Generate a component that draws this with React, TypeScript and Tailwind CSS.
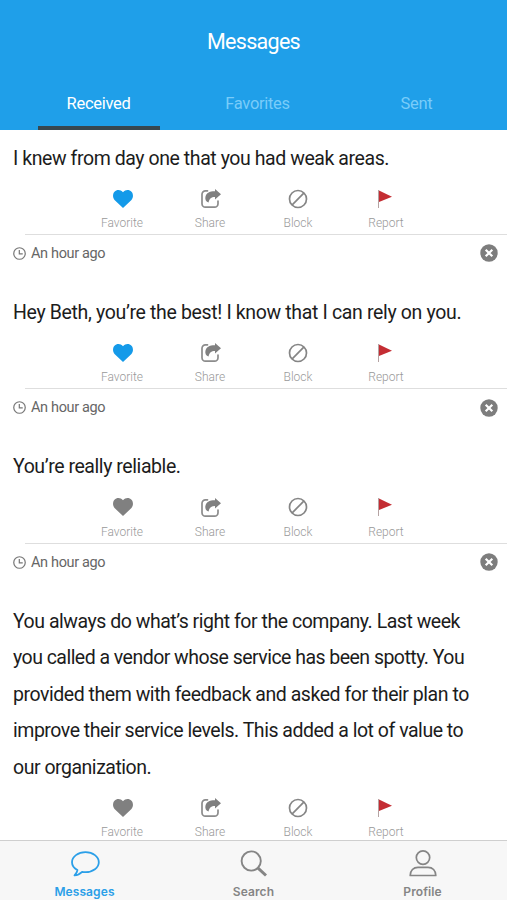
import React from 'react'
import clsx from 'clsx'

interface Line {
  text: string
  tracking: string
}

interface Message {
  id: number
  lines: Line[]
  favorite: boolean
  age?: string
}

const messages: Message[] = [
  {
    id: 1,
    favorite: true,
    age: 'An hour ago',
    lines: [{ text: 'I knew from day one that you had weak areas.', tracking: 'tracking-[-0.43px]' }],
  },
  {
    id: 2,
    favorite: true,
    age: 'An hour ago',
    lines: [
      {
        text: 'Hey Beth, you’re the best! I know that I can rely on you.',
        tracking: 'tracking-[-0.35px]',
      },
    ],
  },
  {
    id: 3,
    favorite: false,
    age: 'An hour ago',
    lines: [{ text: 'You’re really reliable.', tracking: 'tracking-[-0.43px]' }],
  },
  {
    id: 4,
    favorite: false,
    lines: [
      {
        text: 'You always do what’s right for the company. Last week',
        tracking: 'tracking-[-0.47px]',
      },
      {
        text: 'you called a vendor whose service has been spotty. You',
        tracking: 'tracking-[-0.53px]',
      },
      {
        text: 'provided them with feedback and asked for their plan to',
        tracking: 'tracking-[-0.46px]',
      },
      {
        text: 'improve their service levels. This added a lot of value to',
        tracking: 'tracking-[-0.48px]',
      },
      { text: 'our organization.', tracking: 'tracking-[-0.48px]' },
    ],
  },
]

function HeartIcon({ active }: { active: boolean }) {
  return (
    <svg
      viewBox="0 0 20 18"
      className={clsx('ml-[2px] h-[18px] w-5', active ? 'fill-[#149ae9]' : 'fill-[#808080]')}
    >
      <path d="M10 18 1.8 10.2C-.5 7.8-.5 4 1.5 1.8 3.7-.6 7.6-.5 10 2.2c2.4-2.7 6.3-2.8 8.5-.4 2 2.2 2 6-.3 8.4z" />
    </svg>
  )
}

function ShareIcon() {
  return (
    <svg viewBox="0 0 20 19" className="ml-[2px] h-[19px] w-5" fill="none">
      <path
        d="M6.5 1.8H4.4A3.4 3.4 0 0 0 1 5.2v9.5a3.4 3.4 0 0 0 3.4 3.4h9.2a3.4 3.4 0 0 0 3.4-3.4v-2.7"
        stroke="#8c8c8c"
        strokeWidth="1.7"
        strokeLinecap="round"
      />
      <path
        d="M14 0 20 5.2 14 10.6V7.9C10.2 7.9 8.4 9.3 7.6 13.4 5 12.8 3.9 10.5 4.4 8 5.1 4.2 8 2.2 14 2.2z"
        fill="#808080"
      />
    </svg>
  )
}

function BlockIcon() {
  return (
    <svg
      viewBox="0 0 20 20"
      className="mr-px size-5"
      fill="none"
      stroke="#858585"
      strokeWidth="1.7"
    >
      <circle cx="10" cy="10" r="8.5" />
      <path d="M4.2 15.8 15.8 4.2" />
    </svg>
  )
}

function FlagIcon() {
  return (
    <svg viewBox="0 0 14 18" className="mr-[2px] h-[18px] w-3.5">
      <path d="M.5 0V18" stroke="#b5a3a3" strokeWidth="1" />
      <path d="M1 .6 14 6.8 1 12z" fill="#c42d33" />
    </svg>
  )
}

function ClockIcon() {
  return (
    <svg
      viewBox="0 0 14 14"
      className="size-[13px]"
      fill="none"
      stroke="#777"
      strokeWidth="1.3"
    >
      <circle cx="7" cy="7" r="6.2" />
      <path d="M6.8 3.2V7.5H10.5" />
    </svg>
  )
}

function Action({ label, children }: { label: string; children: React.ReactNode }) {
  return (
    <button className="flex w-22 flex-col items-center">
      <span className="flex h-5 items-center">{children}</span>
      <span className="mt-[6.2px] text-[12px] leading-4 font-light text-[#999]">{label}</span>
    </button>
  )
}

function MessageItem({ message }: { message: Message }) {
  return (
    <article>
      <div className="pt-[0.7px] pl-[13px]">
        {message.lines.map((line) => (
          <p
            key={line.text}
            className={clsx(
              'h-[36.5px] text-[19.5px] leading-[36.5px] whitespace-nowrap text-[#1c1c1c]',
              line.tracking,
            )}
          >
            {line.text}
          </p>
        ))}
      </div>
      <div className="ml-[25px] flex h-[57.8px] border-b border-[#dedede] pt-[11.5px] pl-[53px]">
        <Action label="Favorite">
          <HeartIcon active={message.favorite} />
        </Action>
        <Action label="Share">
          <ShareIcon />
        </Action>
        <Action label="Block">
          <BlockIcon />
        </Action>
        <Action label="Report">
          <FlagIcon />
        </Action>
      </div>
      {message.age && (
        <div className="flex h-[37px] items-center pr-[9px] pl-[13px]">
          <ClockIcon />
          <span className="ml-[5px] pt-px text-[14.5px] tracking-[-0.35px] text-[#666]">
            {message.age}
          </span>
          <svg viewBox="0 0 18 18" className="ml-auto size-[18px]">
            <circle cx="9" cy="9" r="8.7" fill="#7d7d7d" />
            <path d="m5.7 5.7 6.6 6.6m0-6.6-6.6 6.6" stroke="#fff" strokeWidth="2.2" />
          </svg>
        </div>
      )}
    </article>
  )
}

export default function App() {
  return (
    <div className="flex h-[900px] w-[507px] flex-col overflow-hidden bg-white font-['Roboto',sans-serif]">
      <header className="h-[129.5px] shrink-0 bg-[#1f9fe9] text-white">
        <h1 className="pt-[26px] text-center text-[21.5px] leading-8 tracking-[-0.7px]">
          Messages
        </h1>
        <nav className="mt-[23px] flex pl-[18px] text-center text-[16.5px] tracking-[-0.3px]">
          <button className="mr-[18px] ml-[20px] h-[48.5px] w-[122px] shrink-0 border-b-4 border-[#37474f] pt-[2px] pr-px">
            Received
          </button>
          <button className="h-[48.5px] w-[159px] shrink-0 pb-[2px] text-[#79ccf9]">
            Favorites
          </button>
          <button className="h-[48.5px] w-[159px] shrink-0 pb-[2px] text-[#79ccf9]">Sent</button>
        </nav>
      </header>

      <main className="flex min-h-0 flex-1 flex-col gap-[22.4px] overflow-hidden pt-[10.4px]">
        {messages.map((message) => (
          <MessageItem key={message.id} message={message} />
        ))}
      </main>

      <footer className="grid h-[60.5px] shrink-0 grid-cols-3 border-t border-[#cfcfcf] bg-[#f7f7f7] font-['Inter',sans-serif] text-[12px] font-semibold tracking-[0.1px] text-[#858585]">
        <button className="flex flex-col items-center pt-[9px] text-[#2b9fe8]">
          <svg
            viewBox="0 0 30 28"
            className="h-7 w-[30px]"
            fill="none"
            stroke="currentColor"
            strokeWidth="1.8"
            strokeLinejoin="round"
          >
            <path d="M15.5 2.2C8 2.2 2 6.7 2 12.2c0 3.3 2.1 6 5.4 7.9-.2 2-1.4 3.8-2.9 5.2 3.1-.2 5.6-1.5 7.6-3.5 1.1.3 2.2.4 3.4.4 7.5 0 13.3-4.5 13.3-10S23 2.2 15.5 2.2Z" />
          </svg>
          <span className="mt-[6px] leading-4">Messages</span>
        </button>
        <button className="flex flex-col items-center pt-[9px]">
          <svg viewBox="0 0 28 28" className="size-7" fill="none" stroke="currentColor">
            <circle cx="11.2" cy="11" r="9.6" strokeWidth="1.9" />
            <path d="m17.8 17.8 8.2 7.7" strokeWidth="3" />
          </svg>
          <span className="mt-[6px] leading-4">Search</span>
        </button>
        <button className="flex flex-col items-center pt-[9px]">
          <svg
            viewBox="0 0 28 28"
            className="size-7"
            fill="none"
            stroke="currentColor"
            strokeWidth="1.7"
          >
            <circle cx="14" cy="7.6" r="6.7" />
            <path
              d="M1.2 25.5c0-5 3.3-8.2 7.8-8.2h10c4.5 0 7.8 3.2 7.8 8.2z"
              strokeLinejoin="round"
            />
          </svg>
          <span className="mt-[6px] leading-4">Profile</span>
        </button>
      </footer>
    </div>
  )
}
